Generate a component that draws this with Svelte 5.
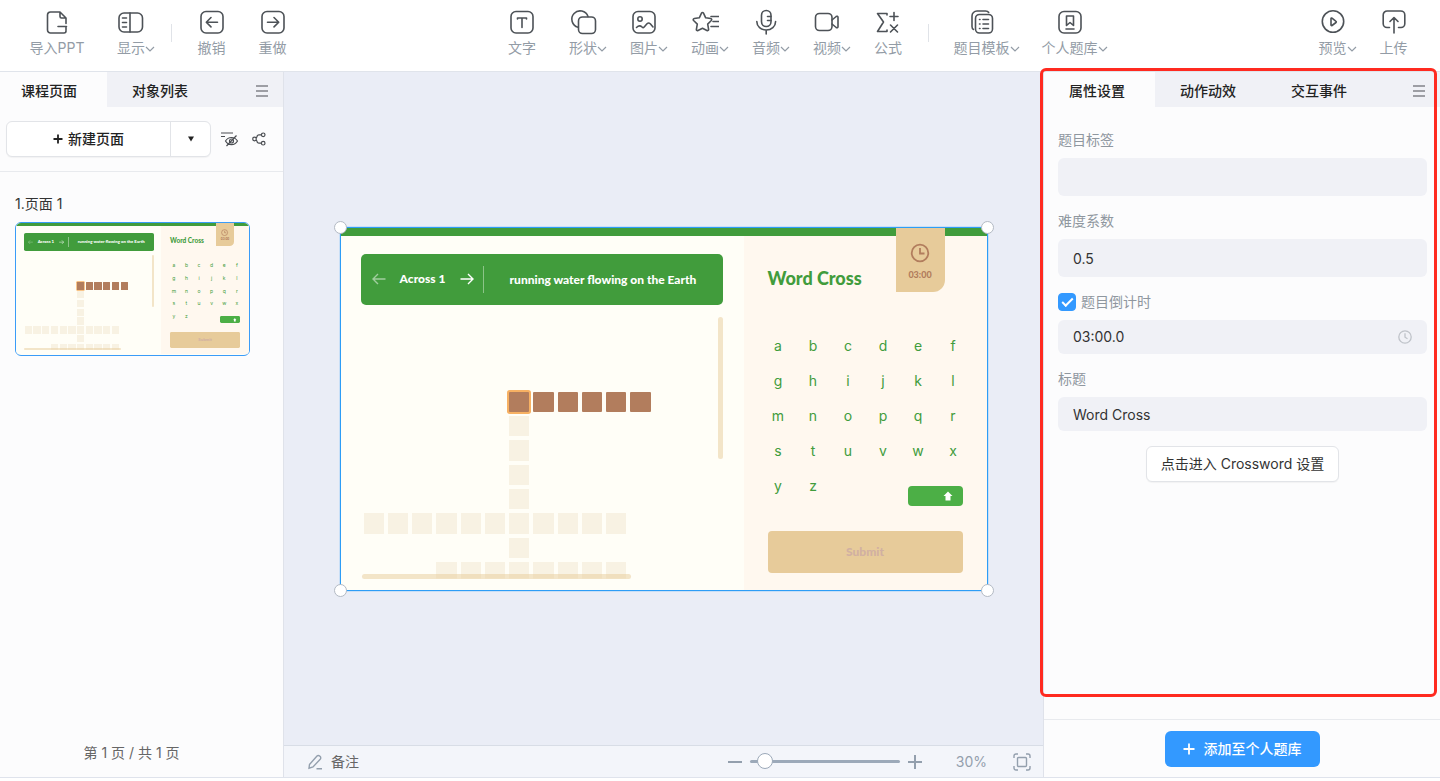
<script>
  const tools = [
    [
      { id: 'import', label: '导入PPT', size: 'wide' },
      { id: 'panel', label: '显示', menu: true, size: 'wide' },
      { id: 'divider', near: true },
      { id: 'undo', label: '撤销' },
      { id: 'redo', label: '重做' }
    ],
    [
      { id: 'text', label: '文字' },
      { id: 'shape', label: '形状', menu: true },
      { id: 'image', label: '图片', menu: true },
      { id: 'motion', label: '动画', menu: true },
      { id: 'audio', label: '音频', menu: true },
      { id: 'video', label: '视频', menu: true },
      { id: 'formula', label: '公式' },
      { id: 'divider' },
      { id: 'template', label: '题目模板', menu: true, size: 'wider' },
      { id: 'bank', label: '个人题库', menu: true, size: 'wider' }
    ],
    [
      { id: 'preview', label: '预览', menu: true },
      { id: 'upload', label: '上传' }
    ]
  ];

  // Rows of the crossword: # answer being filled, o empty cell, @ selected cell
  const board = [
    '......@#####',
    '......o.....',
    '......o.....',
    '......o.....',
    '......o.....',
    'ooooooooooo.',
    '......o.....',
    '...oooooooo.'
  ];
  const cells = board.join('').split('');
  const letters = 'abcdefghijklmnopqrstuvwxyz'.split('');

  let tag = $state('');
  let difficulty = $state('0.5');
  let timed = $state(true);
  let countdown = $state('03:00.0');
  let title = $state('Word Cross');
  let zoom = $state(30);
</script>

{#snippet icon(id)}
  <svg class="icon" viewBox="0 0 28 28" width="28" height="28" aria-hidden="true">
    {#if id === 'import'}
      <path d="M23 22.5v.5a2 2 0 0 1-2 2H7.500a3 3 0 0 1-3-3V7a3 3 0 0 1 3-3H17l6 6v5.500M17 4v4.500a1.500 1.500 0 0 0 1.500 1.500H23M15 18.500h8.500M23 18.500V22" />
    {:else if id === 'panel'}
      <rect x="2" y="5" width="23.500" height="19" rx="5" /><path d="M13 5v19M5.500 10h4M5.500 14.500h4M5.500 19h4" />
    {:else if id === 'undo'}
      <rect x="3" y="3.500" width="22" height="21.500" rx="5" /><path d="M19.500 14.200h-11M13 9.500l-4.700 4.700 4.700 4.700" />
    {:else if id === 'redo'}
      <rect x="3" y="3.500" width="22" height="21.500" rx="5" /><path d="M8.500 14.200h11M15 9.500l4.700 4.700-4.700 4.700" />
    {:else if id === 'text'}
      <rect x="3" y="3.500" width="22" height="21.500" rx="5" /><path d="M9.500 11v-1h9v1M14 10v9.500" />
    {:else if id === 'shape'}
      <path d="M9 19.200A8.300 8.300 0 1 1 19 8.500" /><rect x="9.500" y="9" width="17" height="16.500" rx="4" />
    {:else if id === 'image'}
      <rect x="3" y="3.500" width="22" height="21.500" rx="5" /><circle cx="10" cy="11" r="2.200" /><path d="M6.500 19.500c2-2 3.500-2.500 5.500-.5 1 1 1.600.8 2.400-.2l2.600-3c1.300-1.300 2.500-1 3.500.2l2.500 3" />
    {:else if id === 'motion'}
      <path d="M10.500 5.200c.5-1 1.500-1 2 0l2.200 4.600 5 .7c1 .2 1.300 1.200.6 2l-3.600 3.600.9 5.200c.1 1-.8 1.600-1.700 1.200L11.500 20.200 7 22.500c-.9.400-1.800-.2-1.600-1.200l.9-5.200-3.700-3.600c-.7-.8-.3-1.800.7-2l5-.7zM20 8.500h7.500M22 13.500h5.500M20 18.500h7.500" />
    {:else if id === 'audio'}
      <rect x="9.500" y="2.500" width="9.500" height="16" rx="4.700" /><path d="M4.800 13.500c0 5 4.200 8.500 9.400 8.500s9.400-3.500 9.400-8.500M14.200 22v4M15.500 8.500H19M15.500 12.500H19" />
    {:else if id === 'video'}
      <rect x="2.500" y="5.500" width="16.500" height="17" rx="4" /><path d="M19 12l4.200-3.500c.8-.6 1.800-.2 1.800.8v9.400c0 1-1 1.400-1.800.8L19 16" />
    {:else if id === 'formula'}
      <path d="M13 7V5.500H3.500l6 8.500-6 9.500H13V22M16 8.500h8M20 4.500v8M16.500 17l7 7M23.500 17l-7 7" />
    {:else if id === 'template'}
      <rect x="7.500" y="6.500" width="17" height="18.500" rx="4" /><path d="M5.500 21.500C4.500 21 4 20 4 18.500V8a5 5 0 0 1 5-5h8.500c1.500 0 2.600.5 3.200 1.500M11.500 11.500h.5M15 11.500h5.500M11.500 16h.5M15 16h5.500M11.500 20.500h.5M15 20.500h5.500" />
    {:else if id === 'bank'}
      <rect x="3" y="3.500" width="22" height="21.500" rx="5" /><path d="M10.500 8h7v9.500L14 14.500l-3.500 3zM10 21h8" />
    {:else if id === 'preview'}
      <circle cx="14" cy="13.500" r="10.700" /><path d="M12 10.500v6.500c0 .6.600.8 1 .5l4-3c.4-.4.4-.9 0-1.200l-4-3.200c-.4-.3-1-.1-1 .4z" />
    {:else if id === 'upload'}
      <path d="M9.500 19.500H7a3.800 3.800 0 0 1-3.800-3.800V7A4 4 0 0 1 7.200 3h13.600a4 4 0 0 1 4 4v8.700a3.800 3.800 0 0 1-3.800 3.800h-2.500M14 25V9.500M10 13.500l4-4 4 4" />
    {/if}
  </svg>
{/snippet}

{#snippet menuIcon()}
  <svg viewBox="0 0 14 12" width="14" height="12" aria-hidden="true">
    <path d="M1 1h12M1 6h12M1 11h12" fill="none" stroke="#4a4d52" stroke-width="1.200" />
  </svg>
{/snippet}

{#snippet slide()}
  <div class="slide">
    <div class="slide-strip"></div>
    <div class="slide-body">
      <div class="puzzle">
        <div class="clue">
          <button class="step faded" aria-label="上一条">
            <svg viewBox="0 0 14 12" width="14" height="12"><path d="M13.500 6H1M6 1L1 6l5 5" /></svg>
          </button>
          <span class="clue-no">Across 1</span>
          <button class="step" aria-label="下一条">
            <svg viewBox="0 0 14 12" width="14" height="12"><path d="M.5 6H13M8 1l5 5-5 5" /></svg>
          </button>
          <span class="clue-text">running water flowing on the Earth</span>
        </div>
        <div class="board-view">
          <div class="board">
            {#each cells as cell}
              <i class:empty={cell === 'o'} class:answer={cell === '#' || cell === '@'} class:selected={cell === '@'}></i>
            {/each}
          </div>
        </div>
        <div class="bar-x"></div>
        <div class="bar-y"></div>
      </div>
      <div class="keys">
        <h2>Word Cross</h2>
        <div class="letters">
          {#each letters as letter}<button>{letter}</button>{/each}
        </div>
        <button class="shift" aria-label="大写">
          <svg viewBox="0 0 10 10" width="10" height="10"><path d="M5 .5l4.500 4.500H7.500V9.500h-5V5H.5z" fill="#fff" /></svg>
        </button>
        <button class="submit">Submit</button>
      </div>
      <div class="timer">
        <svg viewBox="0 0 20 20" width="20" height="20"><circle cx="10" cy="10" r="8.300" /><path d="M10 5v5.500h4.500" /></svg>
        <span>03:00</span>
      </div>
    </div>
  </div>
{/snippet}

<div class="app">
  <header class="toolbar">
    {#each tools as group}
      <div class="group">
        {#each group as tool}
          {#if tool.id === 'divider'}
            <span class="divider" class:near={tool.near}></span>
          {:else}
            <button class="tool {tool.size ?? ''}">
              {@render icon(tool.id)}
              <span class="tool-label">
                {tool.label}
                {#if tool.menu}
                  <svg class="chevron" viewBox="0 0 10 6" width="10" height="6" aria-hidden="true"><path d="M1 1l4 4 4-4" /></svg>
                {/if}
              </span>
            </button>
          {/if}
        {/each}
      </div>
    {/each}
  </header>

  <main class="workspace">
    <aside class="pages">
      <nav class="tabs">
        <button class="tab active">课程页面</button>
        <button class="tab">对象列表</button>
        <button class="menu" aria-label="面板菜单">{@render menuIcon()}</button>
      </nav>
      <div class="page-actions">
        <div class="split">
          <button class="new-page">
            <svg viewBox="0 0 10 10" width="10" height="10" aria-hidden="true"><path d="M5 .5v9M.5 5h9" stroke="#222" stroke-width="1.800" /></svg>
            新建页面
          </button>
          <button class="more" aria-label="更多页面类型">
            <svg viewBox="0 0 8 6" width="8" height="6"><path d="M1 .5h6L4 5.500z" fill="#222" /></svg>
          </button>
        </div>
        <button class="small" aria-label="隐藏页面">
          <svg viewBox="0 0 19 16" width="19" height="16"><path d="M1 2h12M1 5.500h4M5.500 10c1.500-2.500 3.500-3.500 6-3.500s4.500 1 6 3.500c-1.500 2.500-3.500 3.700-6 3.700s-4.500-1.200-6-3.700zM16.500 4.500l-10 10.500" /><circle cx="11.500" cy="10" r="2" /></svg>
        </button>
        <button class="small" aria-label="页面结构">
          <svg viewBox="0 0 14 14" width="14" height="14"><circle cx="2.500" cy="7" r="1.800" /><circle cx="11.200" cy="2.800" r="1.800" /><circle cx="11.200" cy="11.200" r="1.800" /><path d="M9.400 2.800H7A2 2 0 0 0 5 4.800L4 6M9.400 11.200H7a2 2 0 0 1-2-2L4 8" /></svg>
        </button>
      </div>
      <div class="page-list">
        <p>1.页面 1</p>
        <div class="thumb" inert>{@render slide()}</div>
      </div>
      <footer class="page-count">第 1 页 / 共 1 页</footer>
    </aside>

    <section class="stage">
      <div class="canvas">
        <div class="selection">
          {@render slide()}
          <div class="outline">
            <i class="handle tl"></i><i class="handle tr"></i><i class="handle bl"></i><i class="handle br"></i>
          </div>
        </div>
      </div>
      <footer class="status">
        <button class="note">
          <svg viewBox="0 0 16 16" width="16" height="16" aria-hidden="true"><path d="M2.500 10.500L10 2a1.800 1.800 0 0 1 2.600 0l.6.6a1.800 1.800 0 0 1 0 2.600L6 13l-4 1.200zM9.500 14.700H15" /></svg>
          备注
        </button>
        <div class="zoom">
          <button aria-label="缩小"><svg viewBox="0 0 14 14" width="14" height="14"><path d="M0 7h14" /></svg></button>
          <input type="range" min="10" max="400" bind:value={zoom} aria-label="缩放" />
          <button aria-label="放大"><svg viewBox="0 0 14 14" width="14" height="14"><path d="M0 7h14M7 0v14" /></svg></button>
        </div>
        <output>{zoom}%</output>
        <button class="fit" aria-label="适应窗口">
          <svg viewBox="0 0 18 18" width="18" height="18"><path d="M1 5V3a2 2 0 0 1 2-2h2M13 1h2a2 2 0 0 1 2 2v2M17 13v2a2 2 0 0 1-2 2h-2M5 17H3a2 2 0 0 1-2-2v-2" /><rect x="4.500" y="4.500" width="9" height="9" rx="1" /></svg>
        </button>
      </footer>
    </section>

    <aside class="props">
      <nav class="tabs">
        <button class="tab active">属性设置</button>
        <button class="tab">动作动效</button>
        <button class="tab">交互事件</button>
        <button class="menu" aria-label="面板菜单">{@render menuIcon()}</button>
      </nav>
      <form class="fields" onsubmit={(e) => e.preventDefault()}>
        <div class="field">
          <label for="tag">题目标签</label>
          <input id="tag" class="box tall" type="text" bind:value={tag} />
        </div>
        <div class="field">
          <label for="difficulty">难度系数</label>
          <input id="difficulty" class="box tall" type="text" bind:value={difficulty} />
        </div>
        <div class="field">
          <label class="check"><input type="checkbox" bind:checked={timed} />题目倒计时</label>
          <div class="box time">
            <input type="text" bind:value={countdown} aria-label="倒计时时长" />
            <svg viewBox="0 0 14 14" width="14" height="14" aria-hidden="true"><circle cx="7" cy="7" r="6.200" /><path d="M7 3.200v4l2.500 1.500" /></svg>
          </div>
        </div>
        <div class="field">
          <label for="title">标题</label>
          <input id="title" class="box" type="text" bind:value={title} />
        </div>
        <button class="enter" type="button">点击进入 Crossword 设置</button>
      </form>
      <footer class="save">
        <button>
          <svg viewBox="0 0 12 12" width="12" height="12" aria-hidden="true"><path d="M6 .5v11M.5 6h11" stroke="#fff" stroke-width="1.800" /></svg>
          添加至个人题库
        </button>
      </footer>
      <div class="focus-frame"></div>
    </aside>
  </main>
</div>

<style>
  :global(body) {
    margin: 0;
  }

  .app {
    display: flex;
    flex-direction: column;
    box-sizing: border-box;
    height: 100vh;
    padding-bottom: 3px;
    background: #fff;
    color: #333;
    font: 14px/20px Inter, 'Noto Sans CJK SC', sans-serif;
  }

  .app *,
  .app *::before {
    box-sizing: border-box;
  }

  button,
  input {
    margin: 0;
    padding: 0;
    border: 0;
    background: none;
    color: inherit;
    font: inherit;
  }

  svg {
    display: block;
    flex: none;
  }

  /* Toolbar */
  .toolbar {
    display: flex;
    flex: none;
    justify-content: space-between;
    height: 72px;
    padding: 8px 16px 0 20px;
    border-bottom: 1px solid #e0e4eb;
  }

  .group {
    display: flex;
    align-items: flex-start;
  }

  .tool {
    display: flex;
    flex-direction: column;
    align-items: center;
    gap: 2px;
    width: 61px;
    color: #939ca6;
  }

  .tool.wide {
    width: 74px;
  }

  .tool.wider {
    width: 88px;
  }

  .icon {
    fill: none;
    stroke: #4d5257;
    stroke-width: 1.6;
    stroke-linecap: round;
    stroke-linejoin: round;
  }

  .tool-label {
    position: relative;
    white-space: nowrap;
  }

  .chevron {
    position: absolute;
    top: 8px;
    left: 100%;
    fill: none;
    stroke: #939ca6;
    stroke-width: 1.2;
  }

  .divider {
    width: 1px;
    height: 18px;
    margin: 16px 9px 0;
    background: #e0e3e8;
  }

  .divider.near {
    margin-left: 3px;
  }

  /* Panels */
  .workspace {
    display: grid;
    flex: 1;
    grid-template-columns: 284px minmax(0, 1fr) 397px;
    min-height: 0;
    border-bottom: 1px solid #dfe3ec;
  }

  .pages,
  .props {
    display: flex;
    flex-direction: column;
    background: #fcfcfd;
  }

  .pages {
    border-right: 1px solid #dfe2ea;
  }

  .props {
    position: relative;
    border-left: 1px solid #dfe2ea;
  }

  .tabs {
    display: flex;
    height: 35px;
    background: #f0f1f6;
  }

  .tab {
    width: 111px;
    padding: 3px 0 0 25px;
    text-align: left;
    color: #222;
    font-weight: 500;
  }

  .pages .tab:first-child {
    width: 107px;
    padding-left: 21px;
  }

  .tab.active {
    background: #fcfcfd;
  }

  .menu {
    margin-left: auto;
    padding: 3px 14px 0;
  }

  .page-actions {
    display: flex;
    align-items: center;
    height: 65px;
    padding-left: 6px;
    border-bottom: 1px solid #e8eaee;
  }

  .split {
    display: flex;
    width: 205px;
    height: 36px;
    margin-right: 9px;
    border: 1px solid #e2e4e8;
    border-radius: 6px;
    background: #fff;
    box-shadow: 0 1px 1px #0000000a;
  }

  .new-page {
    display: flex;
    flex: 1;
    align-items: center;
    justify-content: center;
    gap: 5px;
    color: #222;
    font-weight: 500;
  }

  .more {
    display: grid;
    width: 40px;
    place-items: center;
    border-left: 1px solid #e2e4e8;
  }

  .small {
    margin-right: 13px;
  }

  .small svg {
    fill: none;
    stroke: #4a4d52;
    stroke-width: 1.2;
  }

  .page-list {
    flex: 1;
    padding: 22px 15px 0;
  }

  .page-list p {
    margin: 0 0 8px;
  }

  .thumb {
    width: 235px;
    height: 134px;
    overflow: hidden;
    border: 1px solid #3a9cf8;
    border-radius: 6px;
    background: #fffef7;
  }

  .thumb .slide {
    zoom: 36%;
  }

  .page-count {
    padding: 14px 42px 14px 22px;
    color: #666;
    text-align: center;
  }

  /* Stage */
  .stage {
    display: flex;
    flex-direction: column;
    background: #eaedf6;
  }

  .canvas {
    display: flex;
    flex: 1;
    align-items: center;
    justify-content: center;
  }

  .selection {
    position: relative;
  }

  .outline {
    position: absolute;
    inset: 0;
    border: 1px solid #2d9df6;
    box-shadow: 0 0 1px #2d9df6;
  }

  .handle {
    position: absolute;
    width: 13px;
    height: 13px;
    border: 1px solid #b3bac4;
    border-radius: 50%;
    background: #fff;
  }

  .tl { top: -7px; left: -7px; }
  .tr { top: -7px; right: -7px; }
  .bl { bottom: -7px; left: -7px; }
  .br { right: -7px; bottom: -7px; }

  .status {
    display: flex;
    align-items: center;
    height: 32px;
    padding: 0 12px 0 23px;
    border-top: 1px solid #d8dde6;
    background: #f3f5fa;
    color: #939fad;
  }

  .status svg {
    fill: none;
    stroke: #939fad;
    stroke-width: 1.4;
  }

  .note {
    display: flex;
    align-items: center;
    gap: 8px;
    color: #666;
  }

  .zoom {
    display: flex;
    align-items: center;
    gap: 8px;
    margin-left: auto;
  }

  .zoom svg {
    stroke-width: 2;
  }

  .zoom input {
    width: 150px;
    height: 16px;
    appearance: none;
  }

  .zoom input::-webkit-slider-runnable-track {
    height: 3px;
    border-radius: 2px;
    background: #9ca9b9;
  }

  .zoom input::-webkit-slider-thumb {
    width: 16px;
    height: 16px;
    margin-top: -7px;
    border: 1px solid #9ca9b9;
    border-radius: 50%;
    background: #fff;
    appearance: none;
  }

  output {
    margin: 0 26px 0 34px;
  }

  /* Slide */
  .slide {
    width: 648px;
    height: 364px;
    background: #fffef7;
    font-family: Lato, sans-serif;
    font-size: 12px;
    font-weight: 900;
  }

  .slide-strip {
    height: 9px;
    background: #419c3c;
  }

  .slide-body {
    position: relative;
    display: grid;
    grid-template-columns: 404px 1fr;
    height: 355px;
  }

  .puzzle {
    position: relative;
    padding: 18px 21px 0;
  }

  .clue {
    display: flex;
    align-items: center;
    height: 51px;
    padding-left: 11px;
    border-radius: 5px;
    background: #419c3c;
    color: #fff;
    white-space: nowrap;
  }

  .step svg {
    fill: none;
    stroke: #fff;
    stroke-width: 1.4;
  }

  .faded {
    opacity: 0.5;
  }

  .clue-no {
    flex: 1;
    text-align: center;
  }

  .clue-text {
    width: 240px;
    margin-left: 9px;
    border-left: 1px solid #8cc488;
    line-height: 27px;
    text-align: center;
  }

  .board-view {
    height: 187px;
    margin: 87px 0 0 3px;
  }

  .board {
    display: grid;
    grid-template-columns: repeat(12, 1fr);
    grid-template-rows: repeat(8, 1fr);
    gap: 4px;
    width: 287px;
    height: 191px;
    clip-path: inset(-4px -4px 4px -4px);
  }

  .empty {
    background: #f8f2e3;
  }

  .answer {
    border-radius: 1px;
    background: #b27d5d;
  }

  .selected {
    box-shadow: 0 0 0 2px #f7b163;
  }

  .bar-x,
  .bar-y {
    position: absolute;
    border-radius: 3px;
    background: #e7cb9a;
    opacity: 0.5;
  }

  .bar-x {
    bottom: 12px;
    left: 22px;
    width: 269px;
    height: 5px;
  }

  .bar-y {
    top: 81px;
    right: 21px;
    width: 5px;
    height: 142px;
  }

  .keys {
    display: flex;
    flex-direction: column;
    padding: 28px 25px 0 24px;
    background: #fff8ef;
    color: #419c3c;
  }

  h2 {
    margin: 0 0 37px;
    font-size: 18px;
    font-weight: 900;
    line-height: 28px;
  }

  .letters {
    display: grid;
    grid-template-columns: repeat(6, 1fr);
    grid-auto-rows: 35px;
    margin: 0 -8px 0 -7px;
    font-family: Inter, sans-serif;
    font-size: 14px;
    font-weight: 400;
  }

  .shift {
    display: flex;
    align-items: center;
    align-self: flex-end;
    justify-content: flex-end;
    width: 55px;
    height: 20px;
    margin: -18px 0 25px;
    padding-right: 10px;
    border-radius: 4px;
    background: #4caf46;
  }

  .submit {
    height: 42px;
    border-radius: 4px;
    background: #e7cb9a;
    color: #d1b0a2;
  }

  .timer {
    position: absolute;
    top: -8px;
    right: 43px;
    display: flex;
    flex-direction: column;
    align-items: center;
    gap: 4px;
    width: 49px;
    height: 64px;
    padding-top: 15px;
    border-bottom-right-radius: 12px;
    background: #e7cb9a;
    color: #b27d5d;
    font-size: 9px;
    line-height: 16px;
  }

  .timer svg {
    fill: none;
    stroke: #b27d5d;
    stroke-width: 1.8;
  }

  /* Properties */
  .fields {
    display: flex;
    flex: 1;
    flex-direction: column;
    gap: 15px;
    padding: 23px 13px 0 14px;
  }

  .field {
    display: flex;
    flex-direction: column;
    gap: 8px;
    color: #8f979f;
  }

  .box {
    width: 100%;
    height: 34px;
    padding: 0 15px;
    border-radius: 6px;
    background: #f0f1f6;
    color: #333;
  }

  .tall {
    height: 38px;
  }

  .time {
    display: flex;
    align-items: center;
  }

  .time input {
    flex: 1;
    min-width: 0;
  }

  .time svg {
    fill: none;
    stroke: #bfc3c9;
    stroke-width: 1.3;
  }

  .check {
    display: flex;
    align-items: center;
    gap: 5px;
  }

  .check input {
    display: grid;
    width: 18px;
    height: 18px;
    place-items: center;
    border: 1px solid #c4c9d0;
    border-radius: 4px;
    background: #fff;
    appearance: none;
  }

  .check input:checked {
    border-color: #3399ff;
    background: #3399ff;
  }

  .check input:checked::before {
    width: 11px;
    height: 6px;
    margin-bottom: 3px;
    border: solid #fff;
    border-width: 0 0 2px 2px;
    content: '';
    transform: rotate(-45deg);
  }

  .enter {
    align-self: center;
    height: 36px;
    padding: 0 14px;
    border: 1px solid #e2e4e8;
    border-radius: 6px;
    background: #fff;
    box-shadow: 0 1px 1px #0000000a;
  }

  .save {
    display: flex;
    align-items: center;
    justify-content: center;
    height: 58px;
    border-top: 1px solid #e8eaee;
  }

  .save button {
    display: flex;
    align-items: center;
    gap: 9px;
    height: 36px;
    padding: 0 18px;
    border-radius: 6px;
    background: #3399ff;
    color: #fff;
    font-weight: 500;
  }

  .focus-frame {
    position: absolute;
    inset: -4px 3px 80px -4px;
    border: 3px solid #ff2a20;
    border-radius: 6px;
    pointer-events: none;
  }
</style>
